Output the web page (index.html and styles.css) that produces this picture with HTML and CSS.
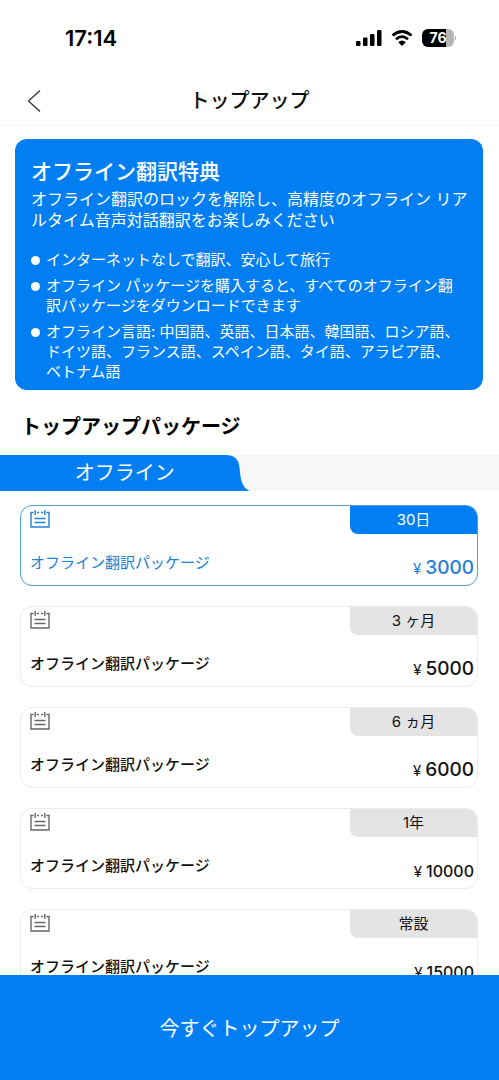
FILE: index.html
```html
<!DOCTYPE html>
<html lang="ja">
<head>
<meta charset="utf-8">
<meta name="viewport" content="width=device-width, initial-scale=1">
<title>トップアップ</title>
<link rel="stylesheet" href="styles.css">
</head>
<body>
<svg class="defs" aria-hidden="true">
  <symbol id="calendar" viewBox="0 0 20 18">
    <path d="M3.5 2.5H1V17H19V2.5H16.5M7 2.5H9M11 2.5H13M5.2 0V5M14.8 0V5M4.5 8.5H15.5M4.5 12.5H15.5" fill="none" stroke="currentColor" stroke-width="1.4"/>
  </symbol>
</svg>
<div class="status">
  <span class="time">17:14</span>
  <div class="indicators">
    <svg width="26" height="16" viewBox="0 0 26 16" aria-hidden="true">
      <rect x="0" y="11" width="4.5" height="5" rx="1"/><rect x="7" y="7.5" width="4.5" height="8.5" rx="1"/><rect x="14" y="4" width="4.5" height="12" rx="1"/><rect x="21" y="0" width="4.5" height="16" rx="1"/>
    </svg>
    <svg width="22" height="16" viewBox="0 0 22 16" aria-hidden="true">
      <path d="M1.5 5.5Q11-2.5 20.5 5.5M5 9.3Q11 4 17 9.3" fill="none" stroke="#000" stroke-width="2.8"/>
      <path d="M7.2 12.2Q11 9 14.8 12.2L11 16Z"/>
    </svg>
    <div class="battery"><span>76</span></div>
  </div>
</div>
<header class="navbar">
  <button class="back" type="button" aria-label="戻る">
    <svg width="14" height="24" viewBox="0 0 14 24" aria-hidden="true"><path d="M13 1.5L1.5 12L13 22.5" fill="none" stroke="#333" stroke-width="1.3"/></svg>
  </button>
  <h1>トップアップ</h1>
</header>
<main>
  <section class="benefits">
    <h2>オフライン翻訳特典</h2>
    <p>オフライン翻訳のロックを解除し、高精度のオフライン リアルタイム音声対話翻訳をお楽しみください</p>
    <ul>
      <li>インターネットなしで翻訳、安心して旅行</li>
      <li>オフライン パッケージを購入すると、すべてのオフライン翻訳パッケージをダウンロードできます</li>
      <li>オフライン言語: 中国語、英語、日本語、韓国語、ロシア語、ドイツ語、フランス語、スペイン語、タイ語、アラビア語、<span class="word">ベトナム語</span></li>
    </ul>
  </section>
  <h2 class="heading">トップアップパッケージ</h2>
  <div class="tabs">
    <button class="tab" type="button" aria-pressed="true">
      <svg viewBox="0 0 249 36" preserveAspectRatio="none" aria-hidden="true"><path d="M0 0H225C234 0 238 4 239 12C240 24 241 32 249 36H0Z" fill="#017ff2"/></svg>
      <span>オフライン</span>
    </button>
  </div>
  <div class="packages">
    <button class="card selected" type="button" aria-pressed="true">
      <svg class="icon" aria-hidden="true"><use href="#calendar"/></svg><span class="term">30日</span>
      <span class="name">オフライン翻訳パッケージ</span><span class="price"><small>¥</small>3000</span>
    </button>
    <button class="card" type="button" aria-pressed="false">
      <svg class="icon" aria-hidden="true"><use href="#calendar"/></svg><span class="term">3 ヶ月</span>
      <span class="name">オフライン翻訳パッケージ</span><span class="price"><small>¥</small>5000</span>
    </button>
    <button class="card" type="button" aria-pressed="false">
      <svg class="icon" aria-hidden="true"><use href="#calendar"/></svg><span class="term">6 ヵ月</span>
      <span class="name">オフライン翻訳パッケージ</span><span class="price"><small>¥</small>6000</span>
    </button>
    <button class="card" type="button" aria-pressed="false">
      <svg class="icon" aria-hidden="true"><use href="#calendar"/></svg><span class="term">1年</span>
      <span class="name">オフライン翻訳パッケージ</span><span class="price long"><small>¥</small>10000</span>
    </button>
    <button class="card" type="button" aria-pressed="false">
      <svg class="icon" aria-hidden="true"><use href="#calendar"/></svg><span class="term">常設</span>
      <span class="name">オフライン翻訳パッケージ</span><span class="price long"><small>¥</small>15000</span>
    </button>
  </div>
</main>
<button class="cta" type="button">今すぐトップアップ</button>
</body>
</html>
```
FILE: styles.css
```css
* { box-sizing: border-box; }
body {
  margin: 0;
  height: 100vh;
  display: flex;
  flex-direction: column;
  background: #fff;
  color: #111;
  font-family: Inter, "Noto Sans CJK JP", sans-serif;
}
button { border: 0; padding: 0; background: none; color: inherit; font: inherit; }
h1, h2, p, ul { margin: 0; padding: 0; }
.defs { display: none; }
.status {
  flex: none;
  height: 76px;
  padding: 0 42px 0 65px;
  display: flex;
  align-items: center;
  justify-content: space-between;
}
.time { font-size: 22px; font-weight: 600; color: #000; }
.indicators { display: flex; align-items: center; gap: 9px; }
.battery {
  position: relative;
  width: 32px;
  height: 18px;
  margin-right: 3px;
  border-radius: 6px;
  background: linear-gradient(90deg, #000 76%, #b4b4b4 76%);
  color: #fff;
  font-size: 14px;
  font-weight: 700;
  line-height: 18px;
  text-align: center;
}
.battery::after {
  content: "";
  position: absolute;
  left: 33px;
  top: 7px;
  width: 1px;
  height: 4px;
  background: #b4b4b4;
}
.navbar {
  flex: none;
  height: 50px;
  padding: 0 27px;
  display: grid;
  grid-template-columns: 40px 1fr 40px;
  align-items: center;
  border-bottom: 1px solid #f6f6f6;
}
.back { height: 40px; display: flex; align-items: center; }
h1 { font-size: 20px; font-weight: 500; line-height: 28px; text-align: center; }
main { flex: 1; min-height: 0; overflow-y: auto; scrollbar-width: none; padding-top: 13px; }
.benefits {
  margin: 0 16px 0 15px;
  padding: 18px 8px 8px 16px;
  border-radius: 12px;
  background: #017ff2;
  color: #fff;
}
.benefits h2 { margin-bottom: 2px; font-size: 21px; font-weight: 500; line-height: 30px; }
.benefits p { font-size: 16px; line-height: 21px; }
.benefits ul {
  list-style: none;
  margin-top: 19px;
  display: flex;
  flex-direction: column;
  gap: 6px;
  font-size: 15px;
  line-height: 20px;
}
.benefits li { position: relative; padding: 0 10px 0 15px; }
.word { white-space: nowrap; }
.benefits li::before {
  content: "";
  position: absolute;
  left: 0;
  top: 6px;
  width: 9px;
  height: 9px;
  border-radius: 50%;
  background: #fff;
}
.heading { margin: 22px 21px 13px; font-size: 20px; font-weight: 700; line-height: 30px; color: #000; }
.tabs { display: flex; background: #f7f7f7; }
.tab { position: relative; width: 50%; height: 36px; color: #fff; font-size: 20px; line-height: 36px; }
.tab svg { position: absolute; inset: 0; width: 100%; height: 100%; }
.tab span { position: relative; }
.packages { padding: 14px 21px 20px 20px; display: flex; flex-direction: column; gap: 20px; }
.card {
  flex: none;
  height: 81px;
  display: grid;
  grid-template-columns: 1fr 127px;
  grid-template-rows: 28px 1fr;
  border: 1px solid #ececec;
  border-radius: 12px;
  overflow: hidden;
  text-align: left;
}
.icon { width: 20px; height: 18px; margin: 4px 0 0 9px; color: #666; }
.term { border-radius: 0 0 0 8px; background: #e4e4e4; font-size: 15px; line-height: 28px; text-align: center; }
.name { padding: 17px 0 0 9px; font-size: 15px; font-weight: 500; line-height: 24px; }
.price { padding: 22px 3px 0 0; font-size: 19px; font-weight: 500; line-height: 24px; text-align: right; }
.price small { margin-right: 4px; font-size: 15px; font-weight: 400; }
.price.long { font-size: 16px; }
.selected { border-color: #4d9fe0; color: #2280d4; }
.selected .icon { color: #2280d4; }
.selected .name { font-weight: 400; }
.selected .term { background: #017ff2; color: #fff; }
.cta { flex: none; height: 105px; background: #017ff2; color: #fff; font-size: 20px; }
```
